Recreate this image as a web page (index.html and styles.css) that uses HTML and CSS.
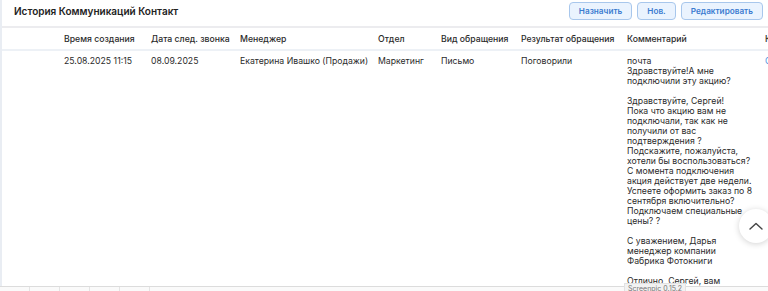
FILE: index.html
```html
<!DOCTYPE html>
<html lang="ru">

<head>
  <meta charset="UTF-8">
  <meta name="viewport" content="width=device-width, initial-scale=1.0">
  <title>История Коммуникаций Контакт</title>
  <link rel="stylesheet" href="styles.css">
</head>

<body>
  <div class="panel">
    <div class="toolbar">
      <h2 class="title">История Коммуникаций Контакт</h2>
      <div class="actions">
        <button class="btn">Назначить</button>
        <button class="btn">Нов.</button>
        <button class="btn">Редактировать</button>
      </div>
    </div>

    <table class="history">
      <colgroup>
        <col class="col-check">
        <col class="col-created">
        <col class="col-call">
        <col class="col-manager">
        <col class="col-dept">
        <col class="col-type">
        <col class="col-result">
        <col class="col-comment">
        <col class="col-contact">
      </colgroup>
      <thead>
        <tr>
          <th></th>
          <th>Время создания</th>
          <th>Дата след. звонка</th>
          <th>Менеджер</th>
          <th>Отдел</th>
          <th>Вид обращения</th>
          <th>Результат обращения</th>
          <th>Комментарий</th>
          <th>Контакт</th>
        </tr>
      </thead>
      <tbody>
        <tr>
          <td></td>
          <td>25.08.2025 11:15</td>
          <td>08.09.2025</td>
          <td>Екатерина Ивашко (Продажи)</td>
          <td>Маркетинг</td>
          <td>Письмо</td>
          <td>Поговорили</td>
          <td class="comment">почта
Здравствуйте!А мне
подключили эту акцию?

Здравствуйте, Сергей!
Пока что акцию вам не
подключали, так как не
получили от вас
подтверждения ?
Подскажите, пожалуйста,
хотели бы воспользоваться?
С момента подключения
акция действует две недели.
Успеете оформить заказ по 8
сентября включительно?
Подключаем специальные
цены? ?

С уважением, Дарья
менеджер компании
Фабрика Фотокниги

Отлично, Сергей, вам</td>
          <td><a class="link" href="#">Сергей</a></td>
        </tr>
      </tbody>
    </table>

    <button class="to-top">
      <svg width="14" height="8" viewBox="0 0 14 8">
        <path d="M1 7 L7 1.5 L13 7" fill="none" stroke="#444" stroke-width="1.4" stroke-linecap="round" stroke-linejoin="round" />
      </svg>
    </button>
  </div>

  <div class="footer">
    <span></span><span></span><span></span><span></span><span></span>
  </div>

  <div class="tip">Screenpic 0.15.2</div>
</body>

</html>
```

FILE: styles.css
```css
* {
  margin: 0px;
  padding: 0px;
  box-sizing: border-box;
  font-family: Inter, "Noto Sans", sans-serif;
}

body {
  width: 768px;
  height: 291px;
  overflow: hidden;
  background: #fff;
  color: #2b2b2b;
  position: relative;
}

.panel {
  position: relative;
  height: 286px;
  overflow: hidden;
  border-left: 2px solid #e9edf3;
}

.toolbar {
  height: 28px;
  display: flex;
  justify-content: space-between;
  align-items: flex-start;
  padding: 2px 5px 0 12px;
  border-bottom: 2px solid #ececef;
}

.title {
  font-size: 10px;
  font-weight: 600;
  color: #222;
  margin-top: 3px;
}

.actions {
  display: flex;
  gap: 5px;
}

.btn {
  height: 18px;
  padding: 0 9px;
  border: 1px solid #a8c7ec;
  border-radius: 4px;
  background: #eaf3fe;
  color: #3b7bd0;
  font-size: 8.2px;
  font-weight: 600;
}

.history {
  table-layout: fixed;
  border-collapse: collapse;
  width: 872px;
  font-size: 8.7px;
  line-height: 10px;
}

.col-check { width: 54px; }
.col-created { width: 87px; }
.col-call { width: 89px; }
.col-manager { width: 138px; }
.col-dept { width: 63px; }
.col-type { width: 80px; }
.col-result { width: 106px; }
.col-comment { width: 138px; }
.col-contact { width: 117px; }

.history th {
  height: 22px;
  padding: 0 8px;
  text-align: left;
  font-weight: 500;
  color: #2b2b2b;
  white-space: nowrap;
  border-bottom: 2px solid #edf1f6;
}

.history td {
  padding: 5px 8px;
  vertical-align: top;
  white-space: nowrap;
  color: #2b2b2b;
}

.history td.comment {
  padding-right: 0;
  white-space: pre-line;
}

.link {
  color: #4a8fe0;
  text-decoration: none;
}

.to-top {
  position: absolute;
  left: 737px;
  top: 209px;
  width: 34px;
  height: 34px;
  border: none;
  border-radius: 50%;
  background: #fff;
  box-shadow: 0 1px 6px rgba(0, 0, 0, 0.18);
  display: flex;
  justify-content: center;
  align-items: center;
}

.footer {
  height: 5px;
  display: flex;
  border-top: 1px solid #dcdcdc;
  background: #fafafa;
}

.footer span {
  width: 30px;
  border-right: 1px solid #e4e4e4;
}

.tip {
  position: absolute;
  left: 624px;
  top: 283px;
  padding: 0 3px;
  background: #f2f2f2;
  border: 1px solid #e2e2e2;
  color: #777;
  font-size: 7px;
  line-height: 9px;
}
```
